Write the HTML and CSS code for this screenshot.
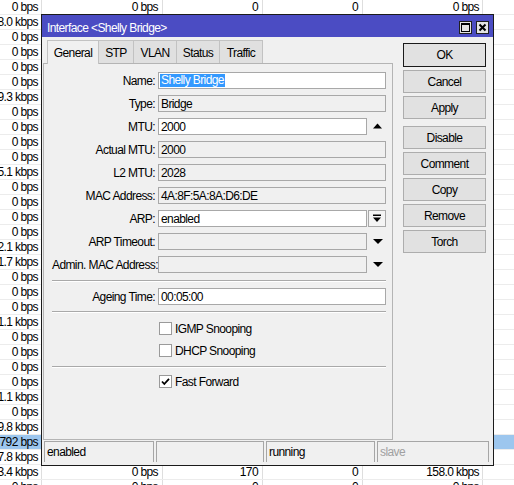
FILE: index.html
```html
<!DOCTYPE html>
<html>
<head>
<meta charset="utf-8">
<title>Interface Shelly Bridge</title>
<link rel="stylesheet" href="styles.css">
</head>
<body>
<div class="table">
  <div class="row"><div class="c c1">0 bps</div><div class="c c2">0 bps</div><div class="c c3">0</div><div class="c c4">0</div><div class="c c5">0 bps</div><div class="c c6"></div></div>
  <div class="row"><div class="c c1">8.0 kbps</div><div class="c c2"></div><div class="c c3"></div><div class="c c4"></div><div class="c c5"></div><div class="c c6"></div></div>
  <div class="row"><div class="c c1">0 bps</div><div class="c c2"></div><div class="c c3"></div><div class="c c4"></div><div class="c c5"></div><div class="c c6"></div></div>
  <div class="row"><div class="c c1">0 bps</div><div class="c c2"></div><div class="c c3"></div><div class="c c4"></div><div class="c c5"></div><div class="c c6"></div></div>
  <div class="row"><div class="c c1">0 bps</div><div class="c c2"></div><div class="c c3"></div><div class="c c4"></div><div class="c c5"></div><div class="c c6"></div></div>
  <div class="row"><div class="c c1">0 bps</div><div class="c c2"></div><div class="c c3"></div><div class="c c4"></div><div class="c c5"></div><div class="c c6"></div></div>
  <div class="row"><div class="c c1">9.3 kbps</div><div class="c c2"></div><div class="c c3"></div><div class="c c4"></div><div class="c c5"></div><div class="c c6"></div></div>
  <div class="row"><div class="c c1">0 bps</div><div class="c c2"></div><div class="c c3"></div><div class="c c4"></div><div class="c c5"></div><div class="c c6"></div></div>
  <div class="row"><div class="c c1">0 bps</div><div class="c c2"></div><div class="c c3"></div><div class="c c4"></div><div class="c c5"></div><div class="c c6"></div></div>
  <div class="row"><div class="c c1">0 bps</div><div class="c c2"></div><div class="c c3"></div><div class="c c4"></div><div class="c c5"></div><div class="c c6"></div></div>
  <div class="row"><div class="c c1">0 bps</div><div class="c c2"></div><div class="c c3"></div><div class="c c4"></div><div class="c c5"></div><div class="c c6"></div></div>
  <div class="row"><div class="c c1">5.1 kbps</div><div class="c c2"></div><div class="c c3"></div><div class="c c4"></div><div class="c c5"></div><div class="c c6"></div></div>
  <div class="row"><div class="c c1">0 bps</div><div class="c c2"></div><div class="c c3"></div><div class="c c4"></div><div class="c c5"></div><div class="c c6"></div></div>
  <div class="row"><div class="c c1">0 bps</div><div class="c c2"></div><div class="c c3"></div><div class="c c4"></div><div class="c c5"></div><div class="c c6"></div></div>
  <div class="row"><div class="c c1">0 bps</div><div class="c c2"></div><div class="c c3"></div><div class="c c4"></div><div class="c c5"></div><div class="c c6"></div></div>
  <div class="row"><div class="c c1">0 bps</div><div class="c c2"></div><div class="c c3"></div><div class="c c4"></div><div class="c c5"></div><div class="c c6"></div></div>
  <div class="row"><div class="c c1">2.1 kbps</div><div class="c c2"></div><div class="c c3"></div><div class="c c4"></div><div class="c c5"></div><div class="c c6"></div></div>
  <div class="row"><div class="c c1">1.7 kbps</div><div class="c c2"></div><div class="c c3"></div><div class="c c4"></div><div class="c c5"></div><div class="c c6"></div></div>
  <div class="row"><div class="c c1">0 bps</div><div class="c c2"></div><div class="c c3"></div><div class="c c4"></div><div class="c c5"></div><div class="c c6"></div></div>
  <div class="row"><div class="c c1">0 bps</div><div class="c c2"></div><div class="c c3"></div><div class="c c4"></div><div class="c c5"></div><div class="c c6"></div></div>
  <div class="row"><div class="c c1">0 bps</div><div class="c c2"></div><div class="c c3"></div><div class="c c4"></div><div class="c c5"></div><div class="c c6"></div></div>
  <div class="row"><div class="c c1">1.1 kbps</div><div class="c c2"></div><div class="c c3"></div><div class="c c4"></div><div class="c c5"></div><div class="c c6"></div></div>
  <div class="row"><div class="c c1">0 bps</div><div class="c c2"></div><div class="c c3"></div><div class="c c4"></div><div class="c c5"></div><div class="c c6"></div></div>
  <div class="row"><div class="c c1">0 bps</div><div class="c c2"></div><div class="c c3"></div><div class="c c4"></div><div class="c c5"></div><div class="c c6"></div></div>
  <div class="row"><div class="c c1">0 bps</div><div class="c c2"></div><div class="c c3"></div><div class="c c4"></div><div class="c c5"></div><div class="c c6"></div></div>
  <div class="row"><div class="c c1">0 bps</div><div class="c c2"></div><div class="c c3"></div><div class="c c4"></div><div class="c c5"></div><div class="c c6"></div></div>
  <div class="row"><div class="c c1">1.1 kbps</div><div class="c c2"></div><div class="c c3"></div><div class="c c4"></div><div class="c c5"></div><div class="c c6"></div></div>
  <div class="row"><div class="c c1">0 bps</div><div class="c c2"></div><div class="c c3"></div><div class="c c4"></div><div class="c c5"></div><div class="c c6"></div></div>
  <div class="row"><div class="c c1">9.8 kbps</div><div class="c c2"></div><div class="c c3"></div><div class="c c4"></div><div class="c c5"></div><div class="c c6"></div></div>
  <div class="row hl"><div class="c c1">792 bps</div><div class="c c2"></div><div class="c c3"></div><div class="c c4"></div><div class="c c5"></div><div class="c c6"></div></div>
  <div class="row"><div class="c c1">7.8 kbps</div><div class="c c2"></div><div class="c c3"></div><div class="c c4"></div><div class="c c5"></div><div class="c c6"></div></div>
  <div class="row"><div class="c c1">3.4 kbps</div><div class="c c2">0 bps</div><div class="c c3">170</div><div class="c c4">0</div><div class="c c5">158.0 kbps</div><div class="c c6"></div></div>
  <div class="row"><div class="c c1">0 bps</div><div class="c c2">0 bps</div><div class="c c3">0</div><div class="c c4">0</div><div class="c c5">0 bps</div><div class="c c6"></div></div>
</div>

<div class="window">
  <div class="titlebar">
    <span class="title">Interface &lt;Shelly Bridge&gt;</span>
    <div class="tbtns">
      <span class="tbtn"><svg width="11" height="11" viewBox="0 0 11 11"><rect x="1.5" y="1.5" width="8" height="8" fill="none" stroke="#000"/><rect x="1" y="1" width="9" height="2" fill="#000"/></svg></span>
      <span class="tbtn"><svg width="11" height="11" viewBox="0 0 11 11"><path d="M2.5 2.5 L8.5 8.5 M8.5 2.5 L2.5 8.5" stroke="#000" stroke-width="2" fill="none"/></svg></span>
    </div>
  </div>
  <div class="wbody">
    <div class="main">
      <div class="left">
        <div class="tabs">
          <div class="tab active t1">General</div>
          <div class="tab t2">STP</div>
          <div class="tab t3">VLAN</div>
          <div class="tab t4">Status</div>
          <div class="tab t5">Traffic</div>
        </div>
        <div class="panel">
          <div class="form">
            <div class="lbl">Name:</div>
            <div class="field"><div class="inp w"><span class="sel">Shelly Bridge</span></div></div>

            <div class="lbl">Type:</div>
            <div class="field"><div class="inp">Bridge</div></div>

            <div class="lbl">MTU:</div>
            <div class="field arrow"><div class="inp w">2000</div><span class="ico"><svg width="19" height="17" viewBox="0 0 19 17"><polygon points="6,10.5 10.5,5.5 15,10.5" fill="#000"/></svg></span></div>

            <div class="lbl">Actual MTU:</div>
            <div class="field"><div class="inp">2000</div></div>

            <div class="lbl">L2 MTU:</div>
            <div class="field"><div class="inp">2028</div></div>

            <div class="lbl">MAC Address:</div>
            <div class="field"><div class="inp">4A:8F:5A:8A:D6:DE</div></div>

            <div class="lbl">ARP:</div>
            <div class="field arrow"><div class="inp w">enabled</div><span class="ico"><span class="dd"><svg width="16" height="15" viewBox="0 0 16 15"><rect x="4" y="3.5" width="8" height="1.5" fill="#000"/><polygon points="4,6.5 12,6.5 8,11" fill="#000"/></svg></span></span></div>

            <div class="lbl">ARP Timeout:</div>
            <div class="field arrow"><div class="inp"></div><span class="ico"><svg width="19" height="17" viewBox="0 0 19 17"><polygon points="6,6 16,6 11,11" fill="#000"/></svg></span></div>

            <div class="lbl">Admin. MAC Address:</div>
            <div class="field arrow"><div class="inp"></div><span class="ico"><svg width="19" height="17" viewBox="0 0 19 17"><polygon points="6,6 16,6 11,11" fill="#000"/></svg></span></div>
          </div>

          <div class="sep s1"></div>

          <div class="form single">
            <div class="lbl">Ageing Time:</div>
            <div class="field"><div class="inp w">00:05:00</div></div>
          </div>

          <div class="sep s2"></div>

          <div class="chk c-first"><span class="box"></span><span>IGMP Snooping</span></div>
          <div class="chk"><span class="box"></span><span>DHCP Snooping</span></div>

          <div class="sep s3"></div>

          <div class="chk c-last"><span class="box"><svg width="11" height="11" viewBox="0 0 11 11"><path d="M2 5.5 L4.3 8 L9 2.8" stroke="#000" stroke-width="1.8" fill="none"/></svg></span><span>Fast Forward</span></div>
        </div>
      </div>
      <div class="buttons">
        <div class="btn default">OK</div>
        <div class="btn">Cancel</div>
        <div class="btn">Apply</div>
        <div class="btn gap">Disable</div>
        <div class="btn">Comment</div>
        <div class="btn">Copy</div>
        <div class="btn">Remove</div>
        <div class="btn">Torch</div>
      </div>
    </div>
    <div class="status">
      <div class="scell">enabled</div>
      <div class="scell"></div>
      <div class="scell">running</div>
      <div class="scell dim">slave</div>
    </div>
  </div>
</div>
</body>
</html>
```

FILE: styles.css
```css
* { box-sizing: border-box; }
html, body { margin: 0; padding: 0; }
body {
  width: 514px;
  height: 485px;
  overflow: hidden;
  position: relative;
  background: #fff;
  font-family: "Liberation Sans", Arial, sans-serif;
  font-size: 12px;
  letter-spacing: -0.6px;
  color: #000;
}

/* background table */
.table { width: 514px; }
.row {
  display: flex;
  height: 15px;
  border-bottom: 1px solid #ececec;
}
.row.hl { background: #9cc6ee; }
.c {
  flex: none;
  display: flex;
  justify-content: flex-end;
  align-items: center;
  overflow: hidden;
  white-space: nowrap;
  border-right: 1px solid #dedede;
  line-height: 14px;
}
.c1 { width: 42px; padding-right: 3px; }
.c2 { width: 121px; padding-right: 4px; }
.c3 { width: 100px; padding-right: 4px; }
.c4 { width: 100px; padding-right: 4px; }
.c5 { width: 120px; padding-right: 3px; }
.c6 { flex: 1; border-right: none; }

/* window */
.window {
  position: absolute;
  left: 41px;
  top: 14px;
  width: 453px;
  height: 452px;
  border: 1px solid #1b1b1b;
  background: #f0f0f0;
  display: flex;
  flex-direction: column;
}
.titlebar {
  flex: none;
  height: 22px;
  background: #4b4cc3;
  color: #fff;
  display: flex;
  align-items: center;
  padding: 0 4px 0 5px;
}
.title { flex: 1; padding-top: 3px; }
.tbtns { display: flex; gap: 4px; margin-top: 2px; }
.tbtn {
  width: 13px;
  height: 13px;
  border: 1px solid #202020;
  background: #e4e4e4;
  display: flex;
}
.wbody { flex: 1; display: flex; flex-direction: column; }
.main { flex: 1; display: flex; padding: 3px 0 0 1px; }
.left { width: 350px; flex: none; display: flex; flex-direction: column; }

.tabs { display: flex; height: 23px; padding-left: 4px; }
.tab {
  height: 23px;
  border: 1px solid #c2c2c2;
  border-bottom: none;
  margin-right: -1px;
  background: #e0e0e0;
  display: flex;
  align-items: center;
  justify-content: center;
  padding-top: 1px;
}
.tab.active { background: #f0f0f0; height: 24px; position: relative; z-index: 1; }
.t1 { width: 52px; }
.t2 { width: 36px; }
.t3 { width: 44px; }
.t4 { width: 44px; }
.t5 { width: 44px; }

.panel {
  height: 377px;
  border: 1px solid #b4b4b4;
  padding: 8px 6px 0 8px;
}

.form {
  display: grid;
  grid-template-columns: 103px 228px;
  column-gap: 3px;
  row-gap: 6px;
  grid-auto-rows: 17px;
}
.lbl { text-align: right; align-self: center; white-space: nowrap; padding-top: 1px; }
.field { display: flex; }
.inp {
  flex: 1;
  height: 17px;
  border: 1px solid #a8a8a8;
  background: #f0f0f0;
  padding-left: 2px;
  display: flex;
  align-items: center;
  white-space: nowrap;
  overflow: hidden;
}
.inp.w { background: #fff; }
.field.arrow .inp { flex: none; width: 209px; }
.ico { width: 19px; height: 17px; display: flex; }
.dd {
  margin-left: 1px;
  width: 18px;
  height: 17px;
  border: 1px solid #a8a8a8;
  background: #f4f4f4;
  display: flex;
}
.sel {
  background: #3399ff;
  color: #fff;
  margin-left: -1px;
  padding: 0 1px;
  line-height: 13px;
}

.sep {
  width: 334px;
  height: 2px;
  border-top: 1px solid #a9a9a9;
  border-bottom: 1px solid #ffffff;
}
.s1 { margin-top: 7px; }
.form.single { margin-top: 6px; }
.s2 { margin-top: 6px; }
.s3 { margin-top: 9px; }

.chk {
  display: flex;
  align-items: center;
  height: 13px;
  margin-left: 107px;
  margin-top: 9px;
  gap: 3px;
}
.c-last { margin-top: 7px; }
.box {
  width: 13px;
  height: 13px;
  border: 1px solid #9a9a9a;
  background: #fff;
  display: flex;
  flex: none;
}

.buttons {
  width: 83px;
  flex: none;
  margin-left: 10px;
  padding-top: 3px;
  display: flex;
  flex-direction: column;
  gap: 3px;
}
.btn {
  height: 23px;
  border: 1px solid #adadad;
  background: #e1e1e1;
  display: flex;
  align-items: center;
  justify-content: center;
}
.btn.default { height: 24px; border-color: #1a1a1a; }
.btn.gap { margin-top: 4px; }

.status {
  flex: none;
  height: 21px;
  margin: 0 0 3px 2px;
  display: grid;
  grid-template-columns: 110px 108px 109px 112px;
  column-gap: 2px;
}
.scell {
  border: 1px solid #a6a6a6;
  border-bottom: none;
  padding-left: 2px;
  display: flex;
  align-items: center;
  white-space: nowrap;
}
.scell.dim { color: #a0a0a0; }
```
